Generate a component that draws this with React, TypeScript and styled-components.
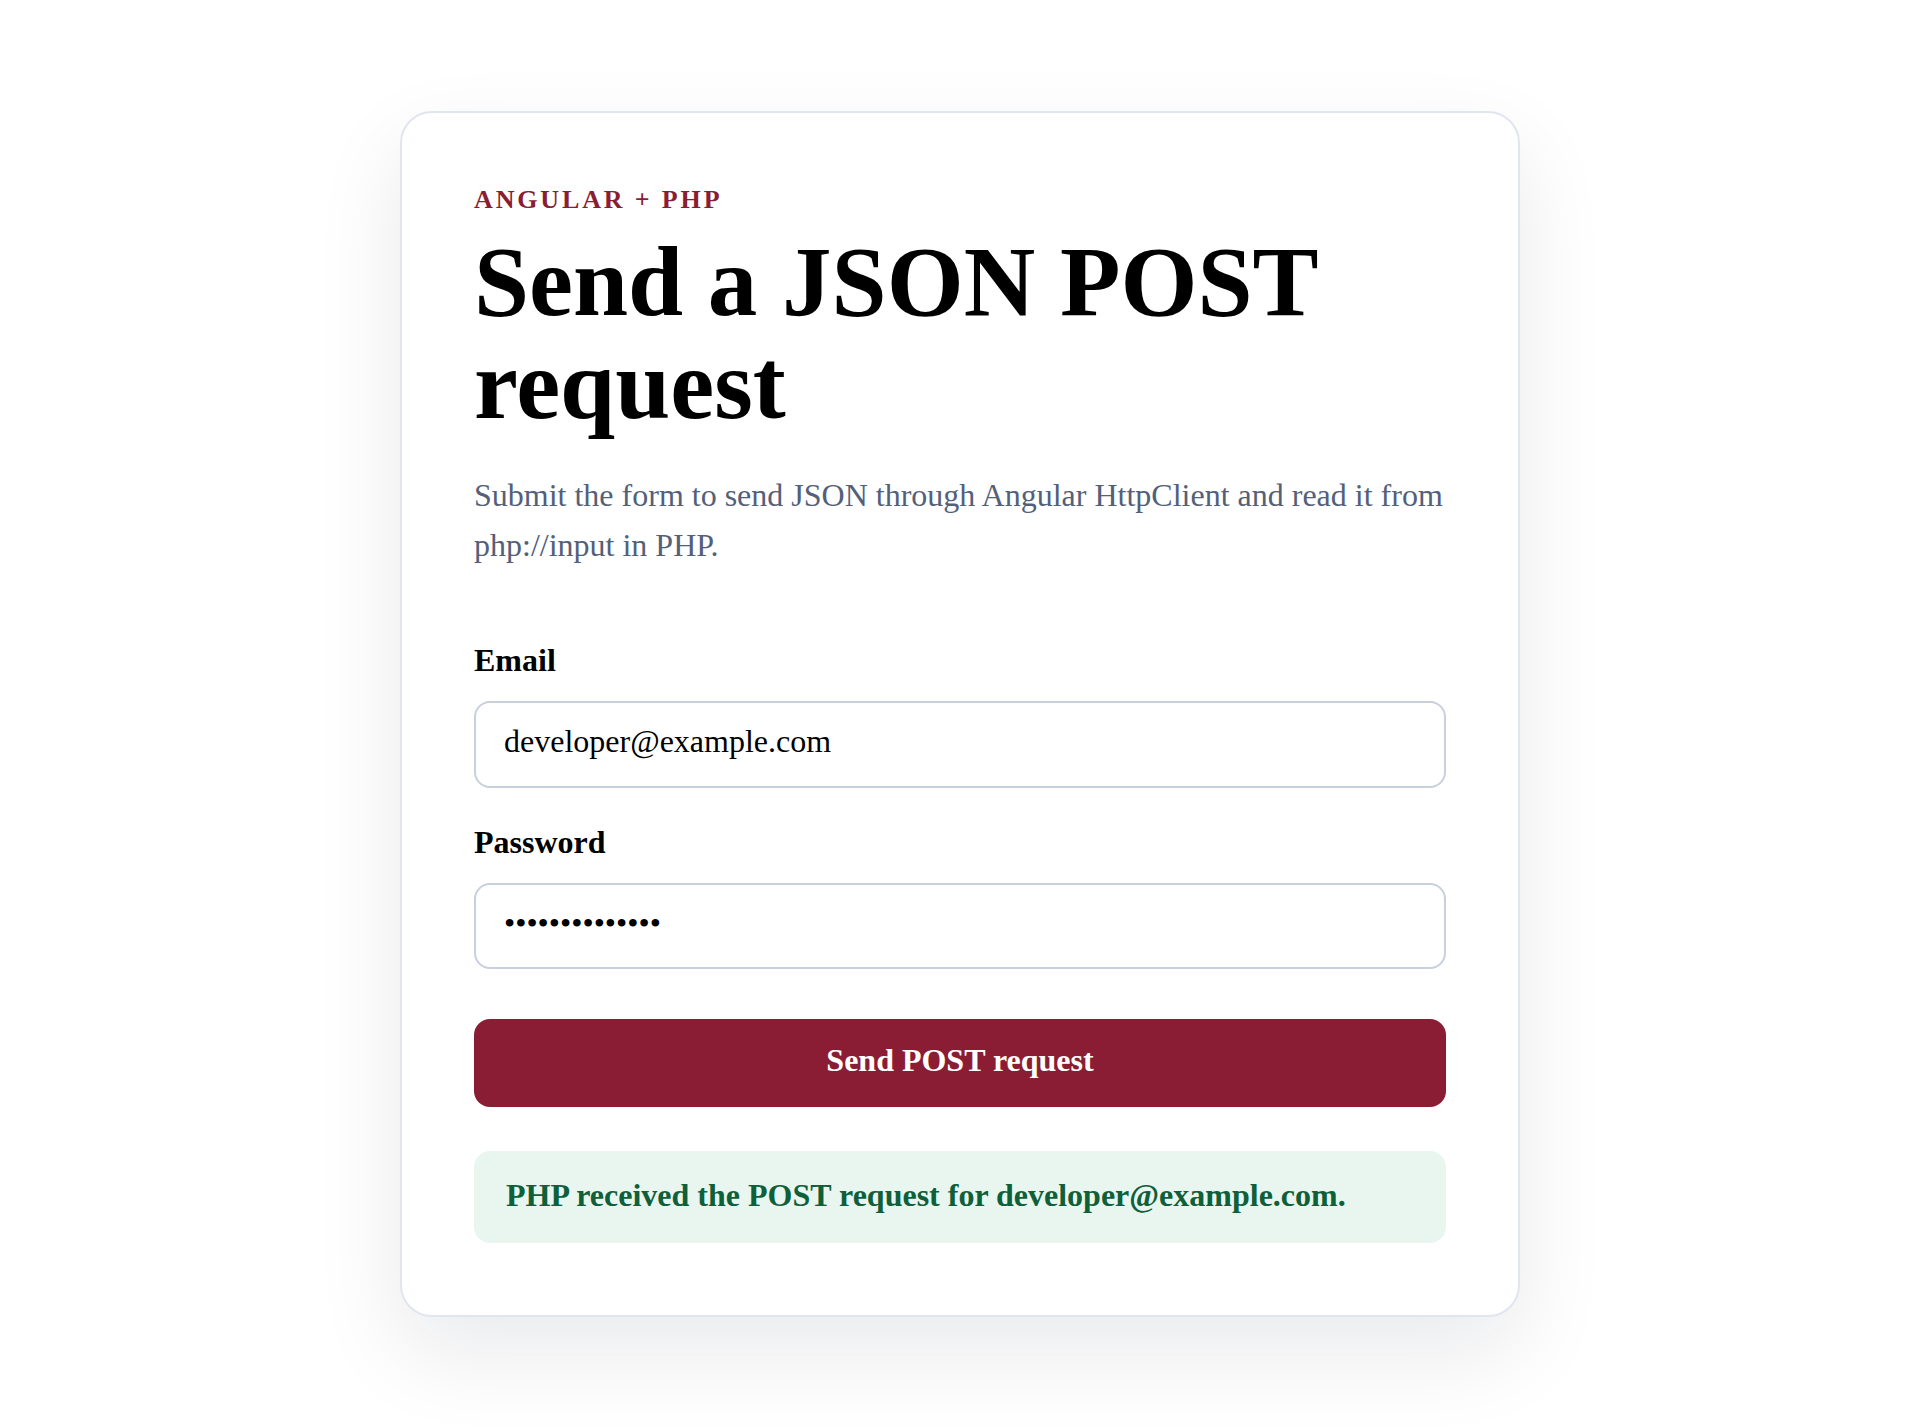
import styled, { createGlobalStyle } from 'styled-components'

const GlobalStyle = createGlobalStyle`
    * {
        box-sizing: border-box;
    }
    body {
        margin: 0;
        background: #ffffff;
        font-family: "Liberation Serif", "Times New Roman", serif;
        color: #0b0b0b;
    }
`

const Page = styled.main`
    min-height: 100vh;
    display: flex;
    align-items: center;
    justify-content: center;
`

const Card = styled.section`
    width: 1120px;
    padding: 72px;
    background: #ffffff;
    border: 2px solid #e1e5ef;
    border-radius: 32px;
    box-shadow: 0 36px 90px rgba(15, 23, 42, 0.09);
`

const Eyebrow = styled.p`
    margin: 2px 0 17px;
    font-size: 26px;
    line-height: 26px;
    font-weight: 700;
    letter-spacing: 0.11em;
    text-transform: uppercase;
    color: #8a1d33;
`

const Title = styled.h1`
    margin: 0;
    font-size: 99px;
    line-height: 103px;
    font-weight: 700;
    color: #000000;
`

const Lead = styled.p`
    margin: 34px 0 0;
    font-size: 32px;
    line-height: 50px;
    color: #536079;
`

const Form = styled.form`
    margin-top: 72px;
    display: flex;
    flex-direction: column;
`

const Field = styled.label`
    display: flex;
    flex-direction: column;
    gap: 22px;
    margin-bottom: 36px;
`

const FieldName = styled.span`
    font-size: 32px;
    font-weight: 700;
    color: #000000;
`

const Input = styled.input`
    width: 100%;
    padding: 19px 28px 25px;
    font: inherit;
    font-size: 32px;
    line-height: 1.2;
    color: #000000;
    background: #ffffff;
    border: 2px solid #c8cfdd;
    border-radius: 16px;
    outline: none;
`

const SubmitButton = styled.button`
    margin-top: 14px;
    height: 88px;
    padding: 0 0 4px;
    border: none;
    border-radius: 16px;
    background: #8a1d33;
    color: #ffffff;
    font-family: "Liberation Serif", serif;
    font-size: 32px;
    font-weight: 700;
    cursor: pointer;
`

const Status = styled.div<{ $ok: boolean }>`
    margin-top: 44px;
    padding: 26px 32px 29px;
    border-radius: 16px;
    background: ${props => (props.$ok ? '#e8f6ef' : '#fdecee')};
    color: ${props => (props.$ok ? '#0f5f3a' : '#8a1d33')};
    font-size: 32px;
    font-weight: 700;
`

function App() {
    const email = 'developer@example.com'

    return (
        <>
            <GlobalStyle />
            <Page>
                <Card>
                    <Eyebrow>Angular + PHP</Eyebrow>
                    <Title>Send a JSON POST request</Title>
                    <Lead>
                        Submit the form to send JSON through Angular HttpClient and read it from php://input in PHP.
                    </Lead>
                    <Form onSubmit={e => e.preventDefault()}>
                        <Field>
                            <FieldName>Email</FieldName>
                            <Input type="email" defaultValue={email} />
                        </Field>
                        <Field>
                            <FieldName>Password</FieldName>
                            <Input type="password" defaultValue="supersecret123" />
                        </Field>
                        <SubmitButton type="submit">Send POST request</SubmitButton>
                    </Form>
                    <Status $ok>PHP received the POST request for {email}.</Status>
                </Card>
            </Page>
        </>
    )
}

export default App
